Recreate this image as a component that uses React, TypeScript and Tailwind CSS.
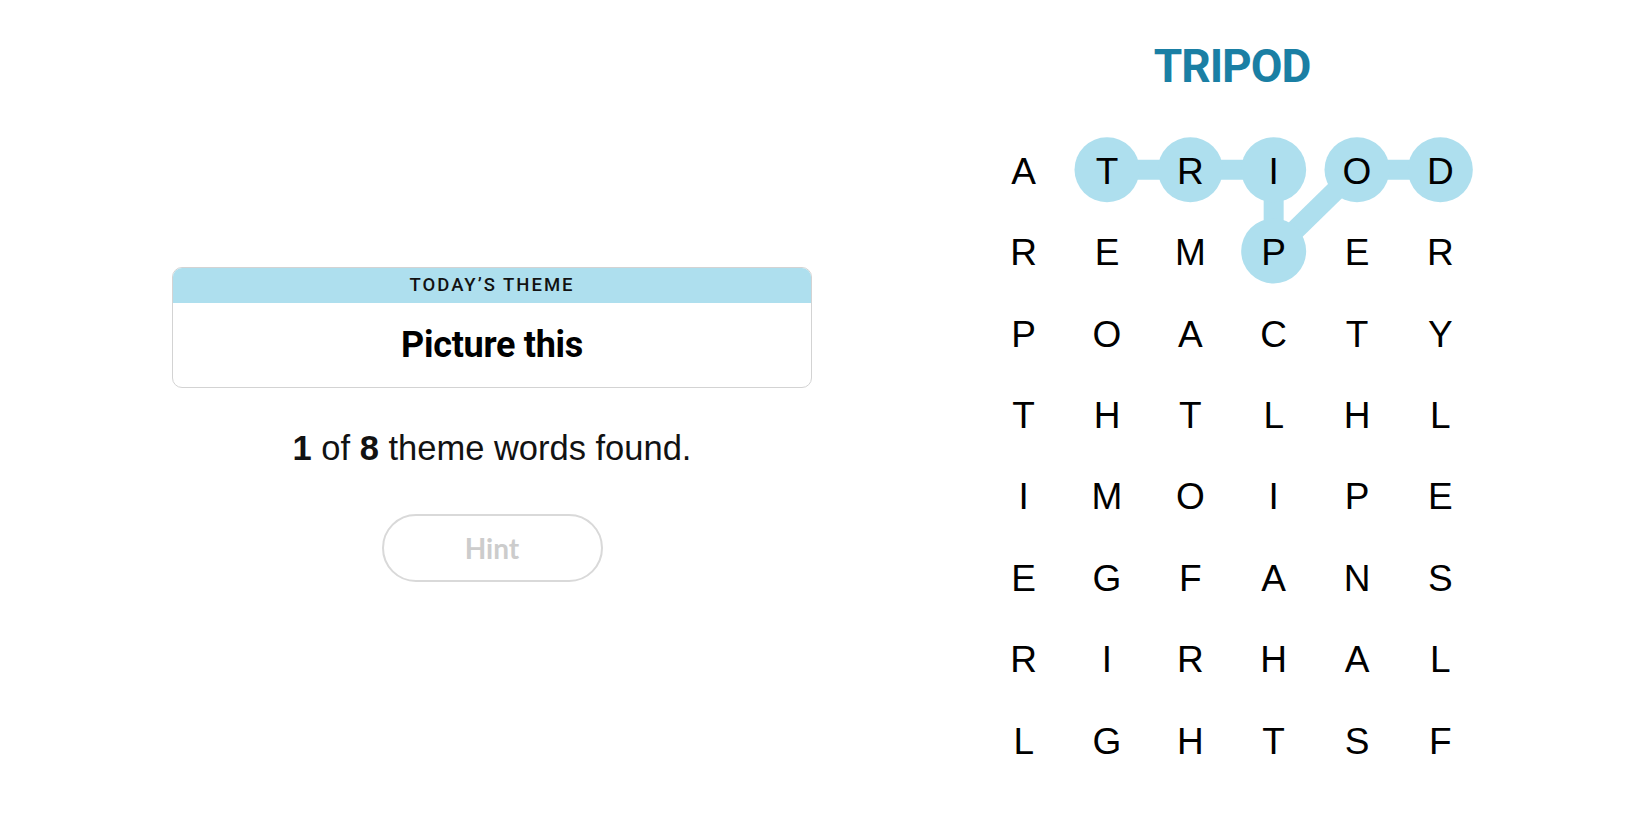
import React from "react";

const GRID = [
  "ATRIOD",
  "REMPER",
  "POACTY",
  "THTLHL",
  "IMOIPE",
  "EGFANS",
  "RIRHAL",
  "LGHTSF",
];

const CW = 500 / 6;
const CH = 651 / 8;

const PATH: [number, number][] = [
  [1, 0],
  [2, 0],
  [3, 0],
  [3, 1],
  [4, 0],
  [5, 0],
];

function cx(c: number) {
  return c * CW + CW / 2;
}
function cy(r: number) {
  return r * CH + CH / 2;
}

export default function App() {
  return (
    <div className="w-[1650px] h-[825px] bg-white overflow-hidden">
      <div className="flex pl-[172px] gap-[170px]">
        {/* Left column */}
        <div className="w-[640px] pt-[267px] flex flex-col items-center">
          <div className="w-full rounded-[10px] border border-[#d3d3d3] overflow-hidden">
            <div
              className="h-[35px] bg-[#aedfee] flex items-center justify-center text-[18.5px] font-medium tracking-[2px] text-[#121212]"
              style={{ fontFamily: 'Roboto, "Liberation Sans", Arial, sans-serif' }}
            >
              TODAY’S THEME
            </div>
            <div
              className="h-[84px] flex items-center justify-center text-[36px] font-bold text-black tracking-[-0.3px]"
              style={{ fontFamily: 'Roboto, "Liberation Sans", Arial, sans-serif' }}
            >
              Picture this
            </div>
          </div>
          <div
            className="mt-[40px] h-[40px] leading-[40px] text-[34.5px] text-[#121212]"
            style={{ fontFamily: '"Liberation Sans", Arial, sans-serif' }}
          >
            <span className="font-bold">1</span> of <span className="font-bold">8</span> theme words found.
          </div>
          <button
            className="mt-[46px] w-[221px] h-[68px] rounded-full border-2 border-[#d9d9d9] bg-white flex items-center justify-center text-[28px] font-bold text-[#cccccc]"
            style={{ fontFamily: 'Lato, "Liberation Sans", sans-serif' }}
          >
            Hint
          </button>
        </div>

        {/* Right column */}
        <div className="w-[500px] pt-[42px] flex flex-col items-center">
          <div
            className="h-[48px] leading-[48px] text-[46px] font-bold tracking-[-1px] text-[#1a7fa4]"
            style={{ fontFamily: 'Roboto, "Liberation Sans", Arial, sans-serif' }}
          >
            TRIPOD
          </div>
          <div className="relative mt-[39px] w-[500px] h-[651px]">
            <svg
              className="absolute inset-0"
              width={500}
              height={651}
              viewBox="0 0 500 651"
            >
              {PATH.slice(1).map(([c, r], i) => {
                const [pc, pr] = PATH[i];
                return (
                  <line
                    key={"l" + i}
                    x1={cx(pc)}
                    y1={cy(pr)}
                    x2={cx(c)}
                    y2={cy(r)}
                    stroke="#aedfee"
                    strokeWidth={20}
                  />
                );
              })}
              {PATH.map(([c, r], i) => (
                <circle key={"c" + i} cx={cx(c)} cy={cy(r)} r={32.5} fill="#aedfee" />
              ))}
            </svg>
            <div className="relative grid grid-cols-6 grid-rows-8 w-full h-full">
              {GRID.map((row, r) =>
                row.split("").map((ch, c) => (
                  <div
                    key={r + "-" + c}
                    className="flex items-center justify-center pt-[4px] text-[37px] text-black"
                    style={{ fontFamily: '"Liberation Sans", Arial, sans-serif' }}
                  >
                    {ch}
                  </div>
                ))
              )}
            </div>
          </div>
        </div>
      </div>
    </div>
  );
}
